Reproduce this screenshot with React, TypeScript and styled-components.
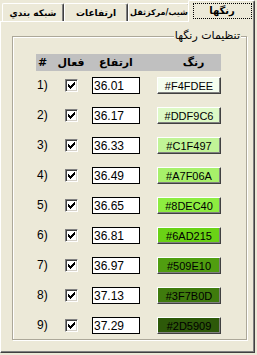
import React, { useState } from 'react';
import styled, { createGlobalStyle } from 'styled-components';

const GlobalStyle = createGlobalStyle`
  html, body {
    margin: 0;
    padding: 0;
    background: #ece9d8;
  }
`;

const Window = styled.div`
  width: 257px;
  height: 355px;
  background: #ece9d8;
  font-family: "Liberation Sans", Arial, sans-serif;
  box-sizing: border-box;
`;

const TabBar = styled.div`
  display: flex;
  align-items: flex-end;
  height: 21px;
  padding-left: 2px;
`;

const Tab = styled.div<{ $active?: boolean; $w: number; $size?: number }>`
  position: relative;
  z-index: ${p => (p.$active ? 2 : 1)};
  box-sizing: border-box;
  width: ${p => p.$w}px;
  height: ${p => (p.$active ? 22 : 18)}px;
  margin-bottom: ${p => (p.$active ? -1 : 0)}px;
  margin-left: ${p => (p.$active ? -2 : 0)}px;
  background: #ece9d8;
  border-top: 1px solid #fff;
  border-left: 1px solid #fff;
  border-right: 1px solid #404040;
  border-radius: 2px 2px 0 0;
  box-shadow: inset -1px 0 0 #808080;
  display: flex;
  align-items: center;
  justify-content: center;
  white-space: nowrap;
  font-family: "DejaVu Sans", sans-serif;
  font-weight: bold;
  font-size: ${p => p.$size || 10}px;
  color: #000;
  padding-bottom: ${p => (p.$active ? 2 : 0)}px;
`;

const FocusRect = styled.span`
  display: flex;
  align-items: center;
  justify-content: center;
  width: 59px;
  height: 16px;
  margin-left: 1px;
  outline: 1px dotted #000;
  outline-offset: -1px;
`;

const Panel = styled.div`
  position: relative;
  z-index: 1;
  box-sizing: border-box;
  width: 255px;
  height: 332px;
  background: #ece9d8;
  border: 1px solid;
  border-color: #fff #404040 #404040 #fff;
  box-shadow: inset -1px -1px 0 #808080;
  padding: 14px 0 0 11px;
`;

const GroupBox = styled.div`
  position: relative;
  box-sizing: border-box;
  width: 235px;
  height: 304px;
  border: 1px solid #aca899;
  box-shadow: inset 1px 1px 0 #fff, 1px 1px 0 #fff;
  padding: 17px 0 0 23px;
`;

const Legend = styled.span`
  position: absolute;
  top: -8px;
  right: 5px;
  padding: 0 1px;
  background: #ece9d8;
  font-family: "DejaVu Sans", sans-serif;
  font-size: 11px;
  line-height: 14px;
  color: #000;
`;

const Grid = styled.div`
  display: grid;
  grid-template-columns: 22px 26px 64px 73px;
  width: 185px;
`;

const HeaderCell = styled.div<{ $align?: string; $shift?: number }>`
  height: 17px;
  background: #c0c0c0;
  display: flex;
  align-items: center;
  justify-content: ${p => p.$align || 'center'};
  padding-left: ${p => p.$shift || 0}px;
  font-family: "DejaVu Sans", sans-serif;
  font-weight: bold;
  font-size: 11px;
  color: #000;
  margin-bottom: 6px;
`;

const RowLabel = styled.div`
  align-self: start;
  padding: 1px 0 0 1px;
  font-size: 12px;
  line-height: 14px;
  color: #000;
`;

const Cell = styled.div<{ $justify?: string }>`
  height: 17px;
  display: flex;
  align-items: center;
  justify-content: ${p => p.$justify || 'center'};
  margin-bottom: 13px;
`;

const CheckBox = styled.span`
  box-sizing: border-box;
  width: 13px;
  height: 13px;
  background: #fff;
  border: 1px solid;
  border-color: #808080 #fff #fff #808080;
  box-shadow: inset 1px 1px 0 #404040, inset -1px -1px 0 #d4d0c8;
  display: flex;
  align-items: center;
  justify-content: center;
  cursor: default;
`;

const HeightInput = styled.input`
  box-sizing: border-box;
  width: 48px;
  height: 17px;
  margin: 0;
  padding: 0 0 0 1px;
  border: 1px solid #000;
  background: #fff;
  font-family: "Liberation Sans", Arial, sans-serif;
  font-size: 12px;
  color: #000;
  outline: none;
`;

const ColorButton = styled.button<{ $bg: string }>`
  box-sizing: border-box;
  width: 64px;
  height: 17px;
  margin: 0;
  padding: 0;
  background: ${p => p.$bg};
  border: 1px solid;
  border-color: #fff #404040 #404040 #fff;
  box-shadow: inset -1px -1px 0 #808080;
  font-family: "Liberation Sans", Arial, sans-serif;
  font-size: 11px;
  color: #000;
  cursor: default;
`;

const rows = [
  { h: '36.01', c: '#F4FDEE' },
  { h: '36.17', c: '#DDF9C6' },
  { h: '36.33', c: '#C1F497' },
  { h: '36.49', c: '#A7F06A' },
  { h: '36.65', c: '#8DEC40' },
  { h: '36.81', c: '#6AD215' },
  { h: '36.97', c: '#509E10' },
  { h: '37.13', c: '#3F7B0D' },
  { h: '37.29', c: '#2D5909' },
];

const Check = () => (
  <svg width="7" height="7" viewBox="0 0 7 7" shapeRendering="crispEdges">
    <path
      d="M0 2h1v3H0z M1 3h1v3H1z M2 4h1v3H2z M3 3h1v3H3z M4 2h1v3H4z M5 1h1v3H5z M6 0h1v3H6z"
      fill="#000"
    />
  </svg>
);

export default function App() {
  const [checked, setChecked] = useState(rows.map(() => true));
  const [heights, setHeights] = useState(rows.map(r => r.h));

  const toggle = (i: number) => setChecked(c => c.map((v, j) => (j === i ? !v : v)));

  return (
    <Window>
      <GlobalStyle />
      <TabBar>
        <Tab $w={62} $size={9}>شبكه بندي</Tab>
        <Tab $w={64} $size={9}>ارتفاعات</Tab>
        <Tab $w={62} $size={8}>شيب/مركزثقل</Tab>
        <Tab $w={67} $active>
          <FocusRect>رنگها</FocusRect>
        </Tab>
      </TabBar>
      <Panel>
        <GroupBox>
          <Legend>تنظيمات رنگها</Legend>
          <Grid>
            <HeaderCell $align="flex-start" $shift={2}>#</HeaderCell>
            <HeaderCell>فعال</HeaderCell>
            <HeaderCell>ارتفاع</HeaderCell>
            <HeaderCell $shift={18}>رنگ</HeaderCell>
            {rows.map((r, i) => (
              <React.Fragment key={r.c}>
                <RowLabel>{i + 1})</RowLabel>
                <Cell>
                  <CheckBox onClick={() => toggle(i)}>{checked[i] && <Check />}</CheckBox>
                </Cell>
                <Cell>
                  <HeightInput
                    value={heights[i]}
                    onChange={e => setHeights(h => h.map((v, j) => (j === i ? e.target.value : v)))}
                  />
                </Cell>
                <Cell $justify="flex-end">
                  <ColorButton $bg={r.c}>{r.c}</ColorButton>
                </Cell>
              </React.Fragment>
            ))}
          </Grid>
        </GroupBox>
      </Panel>
    </Window>
  );
}
